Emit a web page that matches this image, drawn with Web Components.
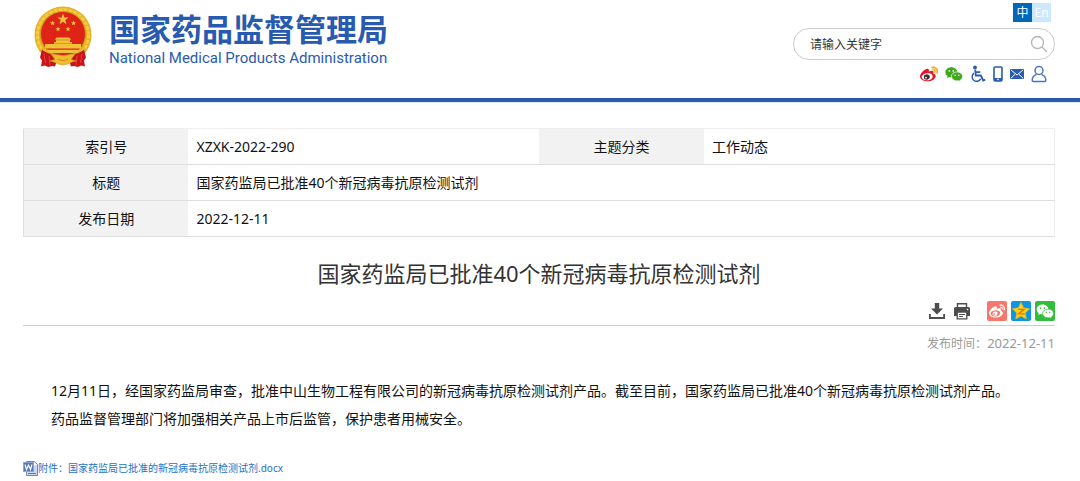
<!DOCTYPE html>
<html lang="zh-CN">
<head>
<meta charset="utf-8">
<meta name="viewport" content="width=device-width, initial-scale=1">
<title>国家药监局已批准40个新冠病毒抗原检测试剂</title>
<style>
  body {
    margin: 0;
    background: #fff;
    color: #111;
    font-family: "Noto Sans", "Noto Sans CJK SC", sans-serif;
    font-size: 14px;
  }
</style>
</head>
<body>
<site-header>
  <site-search slot="search" placeholder="请输入关键字"></site-search>
</site-header>
<article-page>
  <info-table slot="info" index="XZXK-2022-290" category="工作动态" title-text="国家药监局已批准40个新冠病毒抗原检测试剂" date="2022-12-11"></info-table>
  <span slot="title">国家药监局已批准40个新冠病毒抗原检测试剂</span>
  <share-bar slot="share"></share-bar>
  <time slot="date">2022-12-11</time>
  <p>12月11日，经国家药监局审查，批准中山生物工程有限公司的新冠病毒抗原检测试剂产品。截至目前，国家药监局已批准40个新冠病毒抗原检测试剂产品。</p>
  <p>药品监督管理部门将加强相关产品上市后监管，保护患者用械安全。</p>
  <file-link slot="attachment" href="#docx">附件：国家药监局已批准的新冠病毒抗原检测试剂.docx</file-link>
</article-page>

<script>
const WEIBO_FACE = "M10.098 20.323c-3.977.391-7.414-1.406-7.672-4.02-.259-2.609 2.759-5.047 6.74-5.441 3.979-.394 7.413 1.404 7.671 4.018.259 2.6-2.759 5.049-6.737 5.439l-.002.004zM9.05 17.219c-.384.616-1.208.884-1.829.602-.612-.279-.793-.991-.406-1.593.379-.595 1.176-.861 1.793-.601.622.263.82.972.442 1.592zm1.27-1.627c-.141.237-.449.353-.689.253-.236-.09-.313-.361-.177-.586.138-.227.436-.346.672-.24.239.09.315.36.18.601l.014-.028zm.176-2.719c-1.893-.493-4.033.45-4.857 2.118-.836 1.704-.026 3.591 1.886 4.21 1.983.64 4.318-.341 5.132-2.179.8-1.793-.201-3.642-2.161-4.149zm7.563-1.224c-.346-.105-.57-.18-.405-.615.375-.977.42-1.804 0-2.404-.781-1.112-2.915-1.053-5.364-.03 0 0-.766.331-.571-.271.376-1.217.315-2.224-.27-2.809-1.338-1.337-4.869.045-7.888 3.08C1.309 10.87 0 13.273 0 15.348c0 3.981 5.099 6.395 10.086 6.395 6.536 0 10.888-3.801 10.888-6.82 0-1.822-1.547-2.854-2.915-3.284v.01z";
const WEIBO_WAVES = "M19.967 6.557c-.766-.856-1.908-1.187-2.96-.962-.436.09-.706.511-.616.932.09.42.511.691.932.602.511-.105 1.067.044 1.442.465.376.421.466.977.316 1.473-.136.406.089.856.51.992.405.119.857-.105.992-.512.33-1.021.12-2.178-.646-3.035zM22.385 4.362c-1.576-1.757-3.905-2.419-6.054-1.968-.496.104-.812.587-.706 1.081.104.496.586.813 1.082.707 1.532-.331 3.185.15 4.296 1.383 1.112 1.246 1.429 2.943.947 4.416-.165.48.106 1.007.586 1.157.479.165.991-.104 1.157-.586.675-2.088.241-4.478-1.338-6.235z";

const wechat = (fill, eye) => `
  <g fill="${fill}">
    <path d="M8.500 3C4 3 .5 6 .5 9.700c0 2.100 1.100 3.900 2.900 5.100L2.600 17.400l3-1.500c.9.300 1.900.4 2.900.4 4.500 0 8-3 8-6.600S13 3 8.500 3z"/>
    <path stroke="${eye}" d="M16 9.200c-4.200 0-7.400 2.700-7.400 6s3.200 6 7.400 6c.9 0 1.700-.1 2.500-.3l2.700 1.300-.7-2.200c1.800-1.100 3-2.900 3-4.800 0-3.300-3.300-6-7.500-6z"/>
  </g>
  <g fill="${eye}">
    <circle cx="5.800" cy="7.800" r="1.200"/><circle cx="11" cy="7.800" r="1.200"/>
    <circle cx="13.600" cy="13.600" r="1"/><circle cx="18.300" cy="13.600" r="1"/>
  </g>`;

// name -> [width, height, viewBox, markup]
const ICONS = {
  weibo: [18, 18, "0 0 24 24", `
    <path fill="#fff" d="M2 15c0-4 5-6 9-5s7 3 6 6-5 5-9 5-6-3-6-6z"/>
    <path fill="#e6162d" d="${WEIBO_FACE}"/>
    <ellipse cx="9" cy="16" rx="3.800" ry="3.200" fill="#333"/>
    <circle cx="8" cy="16.800" r="1.200" fill="#fff"/>
    <path fill="#f6a623" stroke="#f6a623" stroke-width=".7" d="${WEIBO_WAVES}"/>`],
  wechat: [18, 18, "0 0 24 24", wechat("#3fa81b", "#fff")],
  wheelchair: [16, 18, "0 0 16 18", `
    <circle cx="5" cy="2.400" r="1.900" fill="#2a5cb0"/>
    <path d="M5.200 4.500l.6 6h5l2.400 5 2-.9M5.500 7.200h4.800" fill="none" stroke="#2a5cb0" stroke-width="1.800"/>
    <path d="M4 8.200a4.500 4.500 0 1 0 6.700 5.600" fill="none" stroke="#2a5cb0" stroke-width="1.500"/>`],
  phone: [10, 16, "0 0 10 16", `
    <rect x="1" y="1" width="8" height="14" rx="1.200" fill="#fff" stroke="#2a5cb0" stroke-width="1.600"/>
    <path d="M1 12h8v3H1z" fill="#2a5cb0"/><circle cx="5" cy="13.400" r=".8" fill="#fff"/>`],
  mail: [14, 12, "0 0 14 12", `
    <rect y="1" width="14" height="10" rx="1" fill="#2a5cb0"/>
    <path d="M1 2l6 5 6-5M1 10.200l4.200-4M13 10.200L8.800 6.200" fill="none" stroke="#fff"/>`],
  user: [16, 18, "0 0 16 18", `
    <g fill="none" stroke="#4a74bd" stroke-width="1.500">
      <circle cx="8" cy="5.500" r="4"/>
      <path d="M5.500 9.400C2.800 10.500 1.200 12.500 1.200 15.200c0 .8.400 1.200 1.200 1.200h11.200c.8 0 1.200-.4 1.200-1.200 0-2.700-1.600-4.700-4.300-5.800"/>
    </g>`],
  search: [18, 18, "0 0 18 18", `
    <g fill="none" stroke="#b5b5b5" stroke-width="1.300"><circle cx="7.500" cy="7.500" r="6"/><path d="M12 12l5 5"/></g>`],
  download: [16, 18, "0 0 16 18", `
    <path fill="#4d4d4d" d="M5.800 1h4.400v5.500h3.800L8 12.500 2 6.500h3.800zM0 12h1.800v3h12.400v-3H16v5H0z"/>`],
  print: [18, 18, "0 0 18 18", `
    <path fill="none" stroke="#4d4d4d" stroke-width="1.400" d="M4.500 6V1.700h9V6"/>
    <path fill="#4d4d4d" d="M2.500 5h13A1.500 1.500 0 0 1 17 6.500V14H1V6.500A1.500 1.500 0 0 1 2.500 5z"/>
    <path fill="#fff" stroke="#4d4d4d" stroke-width="1.300" d="M4.200 10h9.600v6.800H4.200z"/>
    <path stroke="#4d4d4d" d="M6 12.500h6M6 14.500h4"/><circle cx="14.500" cy="7.500" r=".8" fill="#fff"/>`],
  "share-weibo": [20, 20, "0 0 30 30", `
    <rect width="30" height="30" rx="3" fill="#f8776c"/>
    <g transform="translate(3 3)" fill="#fff"><path d="${WEIBO_FACE}"/><path d="${WEIBO_WAVES}"/></g>`],
  "share-qzone": [20, 20, "0 0 30 30", `
    <rect width="30" height="30" rx="3" fill="#0b97e4"/>
    <path fill="#ffce18" stroke="#f6b60c" d="M15 2l3.900 8.300 9 1.300-6.500 6.300 1.600 9-8-4.400-8 4.400 1.600-9-6.500-6.300 9-1.300z"/>
    <path fill="none" stroke="#dc7d08" stroke-width="2" d="M10.500 12.500h9l-8 6.500 9 .5"/>`],
  "share-wechat": [20, 20, "0 0 30 30", `
    <rect width="30" height="30" rx="3" fill="#32bd3c"/><g transform="translate(2 2) scale(1.100)">${wechat("#fff", "#32bd3c")}</g>`],
  word: [15, 15, "0 0 15 15", `
    <path fill="#c9daf2" stroke="#6d88b5" d="M3.500.5h8l3 3v11h-11z"/>
    <path fill="#fff" d="M11 1v3h3z"/>
    <path stroke="#5a78ad" d="M5 12.500h8"/>
    <rect x=".5" y="1.500" width="10" height="9" fill="#5577b5" stroke="#8ba4d0"/>
    <path fill="none" stroke="#fff" stroke-width="1.200" d="M2 3.500l1.500 5 2-4.500 2 4.500 1.500-5"/>`],
  emblem: [58, 62, "0 0 58 62", `
    <circle cx="29" cy="29" r="28.500" fill="#e6b01f"/>
    <circle cx="29" cy="29" r="25.500" fill="none" stroke="#f3cb45" stroke-width="3" stroke-dasharray="4 1"/>
    <circle cx="29" cy="28" r="22.500" fill="#de2416" stroke="#cf9a1c"/>
    <g fill="#efc23a">
      <path d="M29 7.500l1.400 4h4.300l-3.400 2.600 1.200 4.100-3.500-2.400-3.500 2.400 1.200-4.100-3.400-2.600h4.300z"/>
      <path d="M18.500 14.500l.7 1.700h1.900l-1.500 1.200.5 1.800-1.600-1-1.600 1 .5-1.800-1.500-1.200h1.900zM39.500 14.500l.7 1.700h1.900l-1.500 1.200.5 1.800-1.600-1-1.600 1 .5-1.800-1.500-1.200h1.900zM24 20.500l.7 1.700h1.900l-1.500 1.200.5 1.800-1.600-1-1.600 1 .5-1.800-1.500-1.200h1.900zM34 20.500l.7 1.700h1.900l-1.500 1.200.5 1.800-1.600-1-1.600 1 .5-1.800-1.500-1.200h1.900z"/>
      <path d="M22.500 31.500h13l1.500 2.300h-1v2.200h2v2h9v4.500H11V38h9v-2h2v-2.200h-1zM12 43.800h34l-3 3.200H15z"/>
    </g>
    <path d="M22 34h14M20 37.500h18" stroke="#d98d20" stroke-width=".8"/>
    <path fill="#c8141b" d="M8 43.500c3 3 8 4.500 13 5l3 3-3 9-3-.5-4 1-3-1.500-4 1 1-6-2-3zM50 43.500c-3 3-8 4.500-13 5l-3 3 3 9 3-.5 4 1 3-1.500 4 1-1-6 2-3z"/>
    <path fill="none" stroke="#ef4135" d="M10 48l1.500 9M15 50l1 9M48 48l-1.500 9M43 50l-1 9"/>
    <path fill="#efbc2f" stroke="#d39a1c" stroke-width=".6" d="M17 48c4-.5 7 1.500 12 1.500S37 47.500 41 48l-4 5.500 5 1.500c-5 .5-8 4-13 4s-8-3.500-13-4l5-1.500z"/>
    <path d="M24 53c3 2 7 2 10 0" fill="none" stroke="#d28a1b"/>`]
};

class UiIcon extends HTMLElement {
  constructor() {
    super();
    this.attachShadow({ mode: "open" });
  }

  connectedCallback() {
    const [width, height, box, markup] = ICONS[this.getAttribute("name")];
    this.shadowRoot.innerHTML = `
      <style>
        :host { display: block; flex: none; }
        svg { display: block; }
      </style>
      <svg width="${width}" height="${height}" viewBox="${box}" aria-hidden="true">${markup}</svg>
    `;
  }
}

class SiteSearch extends HTMLElement {
  constructor() {
    super();
    this.attachShadow({ mode: "open" });
  }

  connectedCallback() {
    const placeholder = this.getAttribute("placeholder") || "";

    this.shadowRoot.innerHTML = `
      <style>
        :host { display: block; }

        form {
          display: flex;
          align-items: center;
          width: 262px;
          height: 32px;
          box-sizing: border-box;
          padding: 0 6px 0 16px;
          border: 1px solid #ccc;
          border-radius: 16px;
        }

        input {
          flex: 1;
          min-width: 0;
          padding: 0;
          border: 0;
          outline: 0;
          background: none;
          font: inherit;
          font-size: 12px;
        }

        input::placeholder { color: #333; }

        button {
          padding: 0;
          border: 0;
          background: none;
          cursor: pointer;
        }
      </style>
      <form role="search">
        <input type="text" aria-label="${placeholder}" placeholder="${placeholder}">
        <button type="button" aria-label="搜索"><ui-icon name="search"></ui-icon></button>
      </form>
    `;
  }
}

class SiteHeader extends HTMLElement {
  constructor() {
    super();
    this.attachShadow({ mode: "open" });
  }

  connectedCallback() {
    this.shadowRoot.innerHTML = `
      <style>
        :host {
          display: block;
          border-bottom: 4px solid #285bb0;
          box-shadow: 0 1px #dcebf8;
        }

        header {
          display: flex;
          justify-content: space-between;
          min-height: 98px;
          box-sizing: border-box;
          padding: 3px 25px 0 34px;
        }

        a { text-decoration: none; }

        .brand {
          display: flex;
          align-items: flex-start;
          gap: 17px;
          padding-top: 3px;
          color: #285bb0;
        }

        .name {
          display: block;
          padding-top: 4px;
          font-size: 31px;
          font-weight: 700;
          line-height: 38px;
          white-space: nowrap;
        }

        .english {
          display: block;
          font-family: Roboto, sans-serif;
          font-size: 15px;
          line-height: 20px;
          white-space: nowrap;
        }

        .tools {
          display: flex;
          flex-direction: column;
          align-items: flex-end;
        }

        .lang {
          display: flex;
          margin: 0 4px 6px 0;
          font-size: 12px;
          line-height: 19px;
          text-align: center;
        }

        .lang a {
          width: 19px;
          background: #cce8ff;
          color: #fff;
        }

        .lang a.current { background: #0068b7; }

        nav {
          display: flex;
          align-items: center;
          gap: 7px;
          padding: 5px 8px 0 0;
        }
      </style>
      <header>
        <a class="brand" href="#home">
          <ui-icon name="emblem"></ui-icon>
          <span>
            <span class="name">国家药品监督管理局</span>
            <span class="english" lang="en">National Medical Products Administration</span>
          </span>
        </a>
        <div class="tools">
          <div class="lang"><a class="current" href="#zh">中</a><a href="#en">En</a></div>
          <slot name="search"></slot>
          <nav>
            <a href="#weibo" aria-label="微博"><ui-icon name="weibo"></ui-icon></a>
            <a href="#wechat" aria-label="微信"><ui-icon name="wechat"></ui-icon></a>
            <a href="#access" aria-label="无障碍"><ui-icon name="wheelchair"></ui-icon></a>
            <a href="#mobile" aria-label="手机版"><ui-icon name="phone"></ui-icon></a>
            <a href="#mail" aria-label="邮箱"><ui-icon name="mail"></ui-icon></a>
            <a href="#user" aria-label="登录"><ui-icon name="user"></ui-icon></a>
          </nav>
        </div>
      </header>
    `;
  }
}

class InfoTable extends HTMLElement {
  constructor() {
    super();
    this.attachShadow({ mode: "open" });
  }

  connectedCallback() {
    this.shadowRoot.innerHTML = `
      <style>
        :host { display: block; }

        table {
          width: 100%;
          table-layout: fixed;
          border-collapse: collapse;
          border: 1px solid #ddd;
          border-top-color: #eee;
          border-right-color: #eee;
        }

        tr { border-bottom: 1px solid #ddd; }

        th, td {
          height: 36px;
          box-sizing: border-box;
          padding: 0 8px;
          font-size: 14px;
          font-weight: 400;
          line-height: 20px;
        }

        th {
          width: 16%;
          background: #f2f2f2;
        }
      </style>
      <table>
        <tr>
          <th scope="row">索引号</th><td>${this.getAttribute("index")}</td>
          <th scope="row">主题分类</th><td>${this.getAttribute("category")}</td>
        </tr>
        <tr><th scope="row">标题</th><td colspan="3">${this.getAttribute("title-text")}</td></tr>
        <tr><th scope="row">发布日期</th><td colspan="3">${this.getAttribute("date")}</td></tr>
      </table>
    `;
  }
}

class ShareBar extends HTMLElement {
  constructor() {
    super();
    this.attachShadow({ mode: "open" });
  }

  connectedCallback() {
    this.shadowRoot.innerHTML = `
      <style>
        :host { display: block; }

        div {
          display: flex;
          align-items: center;
          justify-content: flex-end;
          gap: 4px;
        }

        .actions {
          gap: 8px;
          margin-right: 12px;
        }

        button {
          padding: 0;
          border: 0;
          background: none;
          cursor: pointer;
        }
      </style>
      <div>
        <div class="actions">
          <button type="button" aria-label="下载"><ui-icon name="download"></ui-icon></button>
          <button type="button" aria-label="打印"><ui-icon name="print"></ui-icon></button>
        </div>
        <a href="#weibo" aria-label="分享到微博"><ui-icon name="share-weibo"></ui-icon></a>
        <a href="#qzone" aria-label="分享到QQ空间"><ui-icon name="share-qzone"></ui-icon></a>
        <a href="#wechat" aria-label="分享到微信"><ui-icon name="share-wechat"></ui-icon></a>
      </div>
    `;
  }
}

class FileLink extends HTMLElement {
  constructor() {
    super();
    this.attachShadow({ mode: "open" });
  }

  connectedCallback() {
    this.shadowRoot.innerHTML = `
      <style>
        :host { display: block; }

        a {
          display: inline-flex;
          align-items: center;
          color: #2272c8;
          font-size: 10px;
          line-height: 16px;
          text-decoration: none;
        }
      </style>
      <a href="${this.getAttribute("href")}"><ui-icon name="word"></ui-icon><slot></slot></a>
    `;
  }
}

class ArticlePage extends HTMLElement {
  constructor() {
    super();
    this.attachShadow({ mode: "open" });
  }

  connectedCallback() {
    this.shadowRoot.innerHTML = `
      <style>
        :host {
          display: block;
          padding: 26px 25px 4px 23px;
        }

        h1 {
          margin: 20px 0 12px;
          color: #333;
          font-size: 22px;
          font-weight: 400;
          line-height: 32px;
          text-align: center;
        }

        .share {
          padding-bottom: 4px;
          border-bottom: 1px solid #ccc;
        }

        .date {
          padding-top: 8px;
          color: #999;
          font-size: 12px;
          line-height: 18px;
          text-align: right;
        }

        .date ::slotted(time) { font-size: 13px; }

        .content { padding: 24px 28px 27px; }

        .content ::slotted(p) {
          margin: 0;
          line-height: 28px;
        }
      </style>
      <main>
        <slot name="info"></slot>
        <h1><slot name="title"></slot></h1>
        <div class="share"><slot name="share"></slot></div>
        <div class="date">发布时间：<slot name="date"></slot></div>
        <div class="content"><slot></slot></div>
        <slot name="attachment"></slot>
      </main>
    `;
  }
}

customElements.define("ui-icon", UiIcon);
customElements.define("site-search", SiteSearch);
customElements.define("site-header", SiteHeader);
customElements.define("info-table", InfoTable);
customElements.define("share-bar", ShareBar);
customElements.define("file-link", FileLink);
customElements.define("article-page", ArticlePage);
</script>
</body>
</html>
